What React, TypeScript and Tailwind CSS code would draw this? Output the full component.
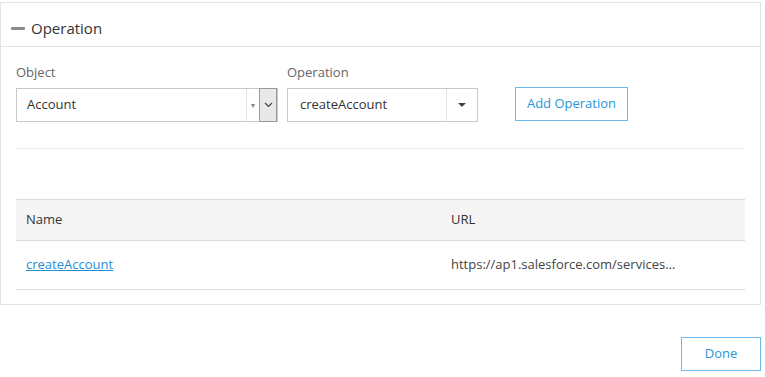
export default function App() {
  return (
    <div className="h-[377px] w-[765px] bg-white font-['Open_Sans',sans-serif] text-[13px] text-[#333]">
      <div className="pt-[2px] pr-[4px]">
        {/* Panel */}
        <section className="border border-[#e3e3e3]">
          {/* Header */}
          <div className="flex h-[44px] items-center gap-[6px] border-b border-[#e3e3e3] pt-[7px] pl-[10px]">
            <span className="mt-[1px] h-[3px] w-[14px] rounded-[1px] bg-[#8a8a8a]" />
            <span className="text-[15px] text-[#333]">Operation</span>
          </div>

          {/* Body */}
          <div className="px-[15px] pt-[16px] pb-[14px]">
            <div className="flex items-end gap-[9px]">
              <div>
                <label className="block pb-[5px] text-[13px] text-[#666]">Object</label>
                <div className="flex h-[34px] w-[262px] items-center border border-[#c8c8c8]">
                  <span className="flex-1 pl-[10px]">Account</span>
                  <span className="h-full w-px bg-[#e3e3e3]" />
                  <span className="w-[12px] text-center text-[8px] leading-none text-[#888]">▾</span>
                  <span className="-my-px flex h-[34px] w-[18px] items-center justify-center border border-[#9a9a9a] bg-[#e8e8e8]">
                    <svg width="9" height="6" viewBox="0 0 9 6" fill="none" stroke="#444" strokeWidth="1.2">
                      <path d="M1 1l3.5 3.5L8 1" />
                    </svg>
                  </span>
                </div>
              </div>
              <div>
                <label className="block pb-[5px] text-[13px] text-[#666]">Operation</label>
                <div className="flex h-[34px] w-[191px] items-center border border-[#c8c8c8]">
                  <span className="flex-1 pl-[12px]">createAccount</span>
                  <span className="h-full w-px bg-[#e3e3e3]" />
                  <span className="flex w-[30px] justify-center">
                    <svg width="8" height="4" viewBox="0 0 8 4">
                      <path d="M0 0h8L4 4z" fill="#444" />
                    </svg>
                  </span>
                </div>
              </div>
              <button className="mb-px ml-[28px] h-[34px] w-[113px] border border-[#6cb9ea] text-[13px] text-[#2795d6]">
                Add Operation
              </button>
            </div>

            <hr className="mt-[26px] border-t border-[#ebebeb]" />

            {/* Table */}
            <table className="mt-[50px] w-full border-collapse text-left">
              <thead>
                <tr className="h-[41px] border-y border-[#dcdcdc] bg-[#f5f5f5]">
                  <th className="w-[425px] pl-[10px] pt-px font-normal text-[#333]">Name</th>
                  <th className="pl-[10px] pt-px font-normal text-[#333]">URL</th>
                </tr>
              </thead>
              <tbody>
                <tr className="h-[49px] border-b border-[#dcdcdc]">
                  <td className="pl-[10px] pt-px">
                    <a href="#" className="text-[#1f8ed3] underline">createAccount</a>
                  </td>
                  <td className="pl-[10px] pt-px text-[#444]">https://ap1.salesforce.com/services…</td>
                </tr>
              </tbody>
            </table>
          </div>
        </section>

        {/* Footer */}
        <div className="flex justify-end pt-[32px]">
          <button className="h-[34px] w-[80px] border border-[#6cb9ea] text-[13px] text-[#2795d6]">
            Done
          </button>
        </div>
      </div>
    </div>
  );
}
